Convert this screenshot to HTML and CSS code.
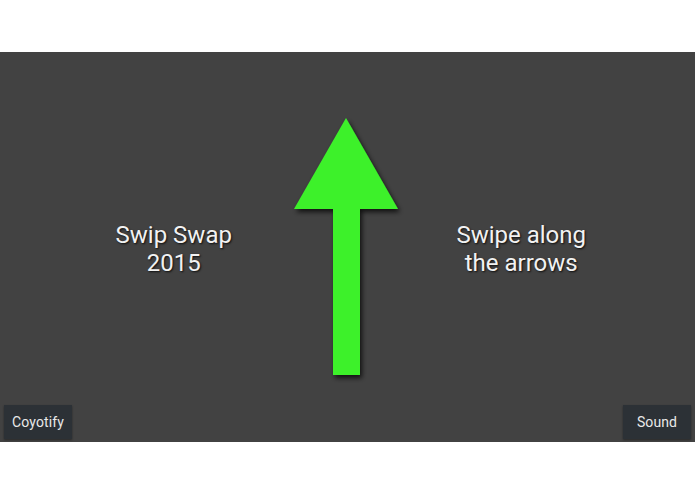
FILE: index.html
```html
<!DOCTYPE html>
<html>
<head>
<meta charset="utf-8">
<link rel="stylesheet" href="styles.css">
</head>
<body>
<div class="screen">
  <div class="halves">
    <div class="half"><p class="caption">Swip Swap<br>2015</p></div>
    <div class="half"><p class="caption">Swipe along<br>the arrows</p></div>
  </div>
  <svg class="arrow" width="695" height="390" viewBox="0 0 695 390">
    <defs>
      <filter id="sh" x="-20%" y="-20%" width="140%" height="140%">
        <feDropShadow dx="2" dy="3" stdDeviation="2.5" flood-color="#000" flood-opacity="0.75"/>
      </filter>
    </defs>
    <path d="M346 66 L398 157 L360 157 L360 323 L333 323 L333 157 L294 157 Z" fill="#3df12b" filter="url(#sh)"/>
  </svg>
  <div class="buttons">
    <button class="btn">Coyotify</button>
    <button class="btn">Sound</button>
  </div>
</div>
</body>
</html>
```
FILE: styles.css
```css
html, body {
  margin: 0;
  padding: 0;
  background: #ffffff;
}
body {
  padding-top: 52px;
  height: 494px;
  box-sizing: border-box;
  font-family: Roboto, "Liberation Sans", sans-serif;
}
.screen {
  position: relative;
  height: 390px;
  background: #424242;
  display: flex;
  flex-direction: column;
}
.halves {
  flex: 1;
  display: flex;
}
.half {
  flex: 1;
  display: flex;
  align-items: center;
  justify-content: center;
}
.caption {
  margin: 0;
  color: #f2f2f2;
  font-size: 24px;
  line-height: 28px;
  text-align: center;
  text-shadow: 1px 1px 2px rgba(0,0,0,0.8);
  padding-top: 3px;
}
.arrow {
  position: absolute;
  left: 0;
  top: 0;
}
.buttons {
  position: absolute;
  left: 4px;
  right: 4px;
  bottom: 3px;
  display: flex;
  justify-content: space-between;
}
.btn {
  height: 34px;
  width: 68px;
  border: none;
  background: #2c3136;
  color: #e9e9e9;
  font-family: Roboto, "Liberation Sans", sans-serif;
  font-size: 14px;
  letter-spacing: 0.1px;
  padding: 0;
  box-shadow: 0 1px 2px rgba(0,0,0,0.4);
}
```
